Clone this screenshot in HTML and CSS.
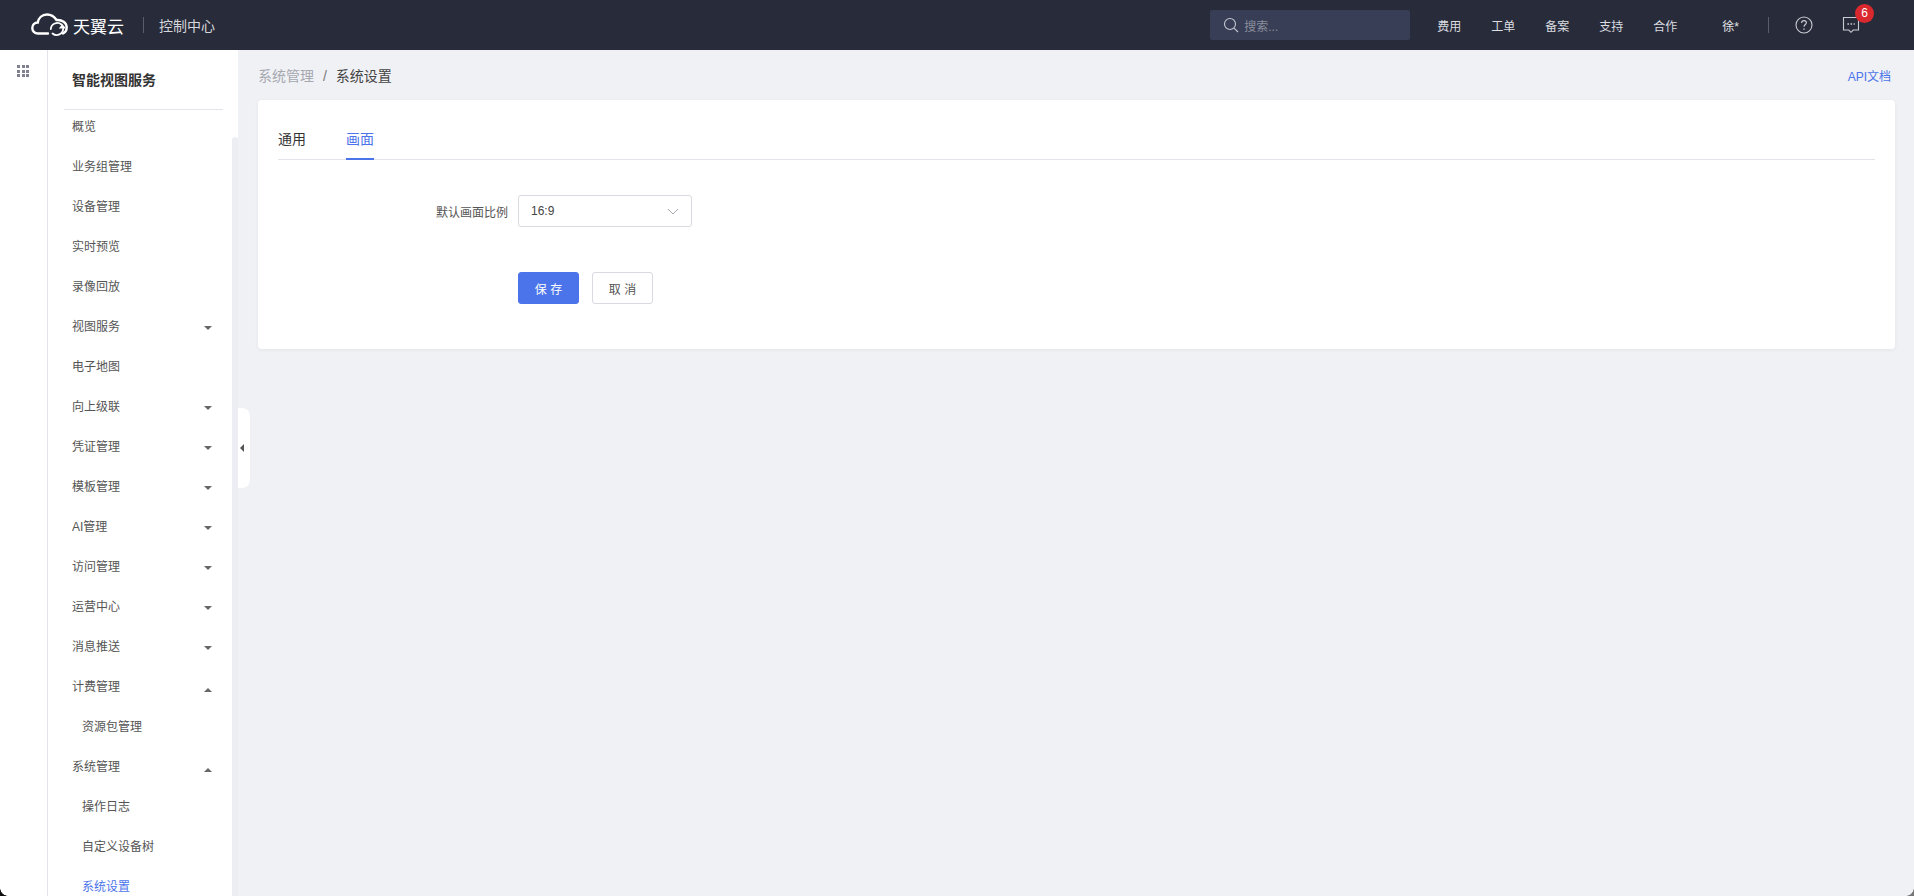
FILE: index.html
```html
<!DOCTYPE html>
<html lang="zh-CN">
<head>
    <meta charset="UTF-8">
    <title>系统设置</title>
    <link rel="stylesheet" href="styles.css">
</head>
<body>
    <header class="topbar">
        <div class="brand">
            <svg class="brand-cloud" width="37" height="24" viewBox="0 0 37 24" fill="none" stroke="#fff" stroke-width="2.4" stroke-linecap="round">
                <path d="M17 20.500H7C3.500 20.500 1.300 18 1.300 15C1.300 12 3.600 9.600 6.800 9.500C7.500 5 11 1.500 16 1.500C20 1.500 23.500 3.800 25.500 7C31 6.500 35.700 9.500 35.700 14.500C35.700 17.500 34 19.500 32 20.500"/>
                <path stroke-width="1.800" d="M19.800 16A6.500 6.500 0 0 1 30.500 11.500"/>
                <path stroke-width="1.800" d="M32.200 15.500A6.500 6.500 0 0 1 21.500 20.500"/>
                <path fill="#fff" stroke="none" d="M27.800 15.500H35L31.400 11Z"/>
            </svg>
            <span class="brand-name">天翼云</span>
            <span class="brand-sep"></span>
            <span class="brand-console">控制中心</span>
        </div>
        <div class="top-right">
            <div class="search">
                <svg width="16" height="16" viewBox="0 0 16 16" fill="none" stroke="#c5c8d0" stroke-width="1.100">
                    <circle cx="7" cy="7" r="5.500"/>
                    <path d="M11 11.200L15 15"/>
                </svg>
                <span>搜索...</span>
            </div>
            <nav class="top-nav">
                <a>费用</a>
                <a>工单</a>
                <a>备案</a>
                <a>支持</a>
                <a>合作</a>
            </nav>
            <span class="user">徐*</span>
            <span class="top-sep"></span>
            <svg class="help" width="18" height="18" viewBox="0 0 18 18" fill="none" stroke="#c9cbd2" stroke-width="1.100">
                <circle cx="9" cy="9" r="8"/>
                <path d="M6.600 7C6.600 5.500 7.700 4.600 9 4.600C10.400 4.600 11.400 5.500 11.400 6.800C11.400 8.500 9 8.600 9 10.800"/>
                <path stroke-width="1.400" d="M9 12.400V13.700"/>
            </svg>
            <div class="msg">
                <svg width="18" height="18" viewBox="0 0 18 18" fill="none" stroke="#c9cbd2" stroke-width="1.100">
                    <path d="M1.500 1.500H16.500V14H11.200L9 16.300L6.800 14H1.500Z"/>
                    <path stroke-width="1.600" stroke-dasharray="1.600 1.500" d="M5.400 8H12.800"/>
                </svg>
                <span class="badge">6</span>
            </div>
        </div>
    </header>

    <div class="layout">
        <div class="rail">
            <div class="rail-grid">
                <i></i><i></i><i></i><i></i><i></i><i></i><i></i><i></i><i></i>
            </div>
        </div>

        <aside class="sidebar">
            <h2 class="side-title">智能视图服务</h2>
            <ul class="menu">
                <li>概览</li>
                <li>业务组管理</li>
                <li>设备管理</li>
                <li>实时预览</li>
                <li>录像回放</li>
                <li class="down">视图服务</li>
                <li>电子地图</li>
                <li class="down">向上级联</li>
                <li class="down">凭证管理</li>
                <li class="down">模板管理</li>
                <li class="down">AI管理</li>
                <li class="down">访问管理</li>
                <li class="down">运营中心</li>
                <li class="down">消息推送</li>
                <li class="up">计费管理</li>
                <li class="sub">资源包管理</li>
                <li class="up">系统管理</li>
                <li class="sub">操作日志</li>
                <li class="sub">自定义设备树</li>
                <li class="sub current">系统设置</li>
            </ul>
        </aside>
        <div class="side-track">
            <div class="side-thumb"></div>
        </div>

        <main class="main">
            <button class="collapse"></button>
            <div class="crumbs">
                <div>
                    <span class="crumb-muted">系统管理</span>
                    <span class="crumb-sep">/</span>
                    <span class="crumb-now">系统设置</span>
                </div>
                <a class="api-link">API文档</a>
            </div>
            <section class="card">
                <div class="tabs">
                    <span class="tab">通用</span>
                    <span class="tab active">画面</span>
                </div>
                <div class="form-row">
                    <label class="form-label">默认画面比例</label>
                    <div class="select">
                        <span>16:9</span>
                        <svg width="12" height="7" viewBox="0 0 12 7" fill="none" stroke="#a9abb3" stroke-width="1">
                            <path d="M1 1L6 6L11 1"/>
                        </svg>
                    </div>
                </div>
                <div class="form-actions">
                    <button class="btn btn-primary">保 存</button>
                    <button class="btn">取 消</button>
                </div>
            </section>
        </main>
    </div>
    <div class="corner corner-left"></div>
    <div class="corner corner-right"></div>
</body>
</html>
```

FILE: styles.css
```css
* {
    box-sizing: border-box;
}

html,
body {
    height: 100%;
}

body {
    margin: 0;
    font-family: "Liberation Sans", "Noto Sans CJK SC", sans-serif;
    font-size: 12px;
    color: #333;
    background-color: #f0f1f5;
    overflow: hidden;
}

.topbar {
    height: 50px;
    display: flex;
    align-items: center;
    justify-content: space-between;
    padding-left: 31px;
    background-color: #282c3a;
    color: #fff;
}

.brand {
    display: flex;
    align-items: center;
}

.brand-name {
    margin-left: 5px;
    font-size: 17px;
}

.brand-sep {
    width: 1px;
    height: 16px;
    margin: 0 15px 0 19px;
    background-color: #5a5e6b;
}

.brand-console {
    font-size: 14px;
    color: #d6d7dc;
}

.top-right {
    display: flex;
    align-items: center;
}

.search {
    width: 200px;
    height: 30px;
    display: flex;
    align-items: center;
    gap: 5px;
    padding-left: 13px;
    background-color: #383e56;
    border-radius: 2px;
    color: #8a8e9c;
}

.top-nav {
    display: flex;
    gap: 30px;
    margin-left: 27px;
    color: #dcdde1;
}

.user {
    margin-left: 45px;
    color: #e4e5e8;
}

.top-sep {
    width: 1px;
    height: 16px;
    margin-left: 29px;
    background-color: #5a5e6b;
}

.help {
    margin-left: 26px;
}

.msg {
    position: relative;
    display: flex;
    margin-left: 29px;
    margin-right: 54px;
}

.badge {
    position: absolute;
    top: -12px;
    left: 13px;
    width: 19px;
    height: 19px;
    border-radius: 50%;
    background-color: #d9292f;
    color: #fff;
    font-size: 12px;
    line-height: 19px;
    text-align: center;
}

.layout {
    height: 846px;
    display: flex;
}

.rail {
    width: 48px;
    padding: 15px 0 0 17px;
    background-color: #fff;
    border-right: 1px solid #e3e4ea;
}

.rail-grid {
    width: 12px;
    display: grid;
    grid-template-columns: repeat(3, 1fr);
    gap: 1.5px;
}

.rail-grid i {
    height: 3px;
    background-color: #7f828e;
}

.sidebar {
    width: 184px;
    padding: 0 9px 0 16px;
    background-color: #fff;
    overflow: hidden;
}

.side-title {
    height: 60px;
    margin: 0;
    padding: 20px 0 0 8px;
    border-bottom: 1px solid #e3e4ea;
    font-size: 14px;
    font-weight: 700;
    line-height: 20px;
    color: #333;
}

.menu {
    margin: 0;
    padding: 0;
    list-style: none;
}

.menu li {
    position: relative;
    height: 40px;
    padding-left: 8px;
    line-height: 35px;
    color: #555;
}

.menu .sub {
    padding-left: 18px;
}

.menu .current {
    color: #4b74ea;
}

.down::after,
.up::after {
    content: "";
    position: absolute;
    right: 11px;
    top: 16px;
    border-left: 4px solid transparent;
    border-right: 4px solid transparent;
}

.down::after {
    border-top: 4px solid #666;
}

.up::after {
    top: 18px;
    border-bottom: 4px solid #666;
}

.side-track {
    width: 6px;
    padding-top: 87px;
    background-color: #fff;
}

.side-thumb {
    height: 100%;
    background-color: #eceef3;
    border-radius: 3px 3px 0 0;
}

.main {
    position: relative;
    flex: 1;
    padding: 0 19px 0 20px;
}

.collapse {
    position: absolute;
    top: 358px;
    left: 0;
    width: 12px;
    height: 80px;
    padding: 0;
    border: 0;
    background-color: #fff;
    border-radius: 0 8px 8px 0;
}

.collapse::after {
    content: "";
    position: absolute;
    top: 36px;
    left: 2px;
    border-top: 4px solid transparent;
    border-bottom: 4px solid transparent;
    border-right: 4px solid #555;
}

.crumbs {
    height: 50px;
    display: flex;
    align-items: center;
    justify-content: space-between;
    padding-right: 4px;
    font-size: 14px;
}

.crumb-muted {
    color: #a6a8b0;
}

.crumb-sep {
    margin: 0 5px;
    color: #777;
}

.crumb-now {
    color: #444;
}

.api-link {
    font-size: 12px;
    color: #4b74ea;
}

.card {
    height: 249px;
    padding: 20px;
    background-color: #fff;
    border-radius: 4px;
    box-shadow: 0 1px 4px rgba(40, 44, 58, 0.06);
}

.tabs {
    height: 40px;
    display: flex;
    gap: 40px;
    border-bottom: 1px solid #e3e4ea;
}

.tab {
    height: 40px;
    font-size: 14px;
    line-height: 38px;
    color: #333;
}

.tab.active {
    color: #4b74ea;
    border-bottom: 2px solid #4b74ea;
}

.form-row {
    display: flex;
    align-items: center;
    margin-top: 35px;
}

.form-label {
    width: 230px;
    margin-right: 10px;
    text-align: right;
    color: #555;
}

.select {
    width: 174px;
    height: 32px;
    display: flex;
    align-items: center;
    justify-content: space-between;
    padding: 0 12px;
    border: 1px solid #d9dae0;
    border-radius: 3px;
    color: #444;
}

.form-actions {
    display: flex;
    gap: 13px;
    margin: 45px 0 0 240px;
}

.btn {
    width: 61px;
    height: 32px;
    padding: 0;
    border: 1px solid #d9dae0;
    border-radius: 3px;
    background-color: #fff;
    color: #555;
    font-family: inherit;
    font-size: 12px;
    white-space: pre;
}

.btn-primary {
    border-color: #4b74ea;
    background-color: #4b74ea;
    color: #fff;
}

.corner {
    position: absolute;
    bottom: 0;
    width: 8px;
    height: 8px;
}

.corner-left {
    left: 0;
    background: radial-gradient(circle at 100% 0, transparent 7.500px, #111 8px);
}

.corner-right {
    right: 0;
    background: radial-gradient(circle at 0 0, transparent 7.500px, #777 8px);
}
```
